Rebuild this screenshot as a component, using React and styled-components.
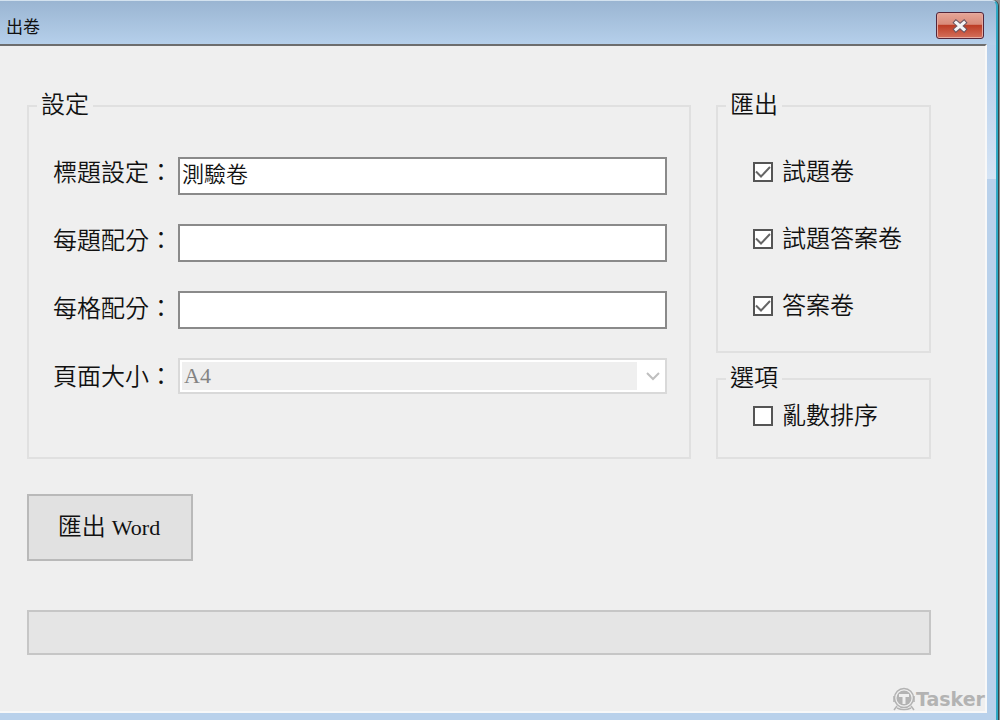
import React, { useState } from "react";
import styled, { createGlobalStyle } from "styled-components";

const EXPORTS = [
  { id: "paper", label: "試題卷", on: true },
  { id: "paperKey", label: "試題答案卷", on: true },
  { id: "key", label: "答案卷", on: true },
];

const CheckItem = ({ label, defaultChecked }) => (
  <CheckLabel>
    <Checkbox type="checkbox" defaultChecked={defaultChecked} />
    <Tick viewBox="0 0 20 20" aria-hidden="true">
      <path d="M3 9.5l5 5L17 5" />
    </Tick>
    {label}
  </CheckLabel>
);

const App = () => {
  const [title, setTitle] = useState("測驗卷");

  return (
    <>
      <GlobalStyle />
      <Window>
        <TitleBar>
          <Caption>出卷</Caption>
          <CloseButton type="button" aria-label="關閉">
            <svg width="18" height="14" viewBox="0 0 18 14" aria-hidden="true">
              <g fill="none" strokeLinecap="square">
                <path d="M5 3.5l8 7M13 3.5l-8 7" stroke="#6b5560" strokeWidth="5" />
                <path d="M5 3.5l8 7M13 3.5l-8 7" stroke="#f4f4f6" strokeWidth="3" />
              </g>
            </svg>
          </CloseButton>
        </TitleBar>
        <Client>
          <Panels>
            <Group>
              <Legend>設定</Legend>
              <Form>
                <Labels>
                  <label htmlFor="title">標題設定：</label>
                  <label htmlFor="perQuestion">每題配分：</label>
                  <label htmlFor="perBlank">每格配分：</label>
                  <label htmlFor="pageSize">頁面大小：</label>
                </Labels>
                <Fields>
                  <TextInput
                    id="title"
                    value={title}
                    onChange={(e) => setTitle(e.target.value)}
                  />
                  <TextInput id="perQuestion" />
                  <TextInput id="perBlank" />
                  <Combo>
                    <Select id="pageSize" disabled>
                      <option>A4</option>
                    </Select>
                    <svg width="28" height="28" viewBox="0 0 28 28" aria-hidden="true">
                      <path
                        d="M10 11l6 6 6-6"
                        fill="none"
                        stroke="#bfbfbf"
                        strokeWidth="2"
                      />
                    </svg>
                  </Combo>
                </Fields>
              </Form>
            </Group>
            <Side>
              <Group $grow>
                <Legend>匯出</Legend>
                <Checks $top={33}>
                  {EXPORTS.map((item) => (
                    <CheckItem
                      key={item.id}
                      label={item.label}
                      defaultChecked={item.on}
                    />
                  ))}
                </Checks>
              </Group>
              <Group>
                <Legend>選項</Legend>
                <Checks $top={4}>
                  <CheckItem label="亂數排序" />
                </Checks>
              </Group>
            </Side>
          </Panels>
          <ExportButton type="button">
            匯出 <Latin>Word</Latin>
          </ExportButton>
          <Progress value="0" max="100" aria-label="匯出進度" />
          <Watermark>
            <svg width="22" height="24" viewBox="0 0 22 24" aria-hidden="true">
              <g fill="none" stroke="#b3b3b3" strokeWidth="1.5">
                <circle cx="11" cy="11" r="9.5" />
                <path d="M4 19l-3 4M18 19l3 4M4 21c4 2 10 2 14 0M1 9v6M21 9v6" />
              </g>
              <circle cx="11" cy="11" r="7.5" fill="#b3b3b3" />
              <path d="M6 7h10v3h-3.5v7h-3v-7H6z" fill="#efefef" />
            </svg>
            Tasker
          </Watermark>
        </Client>
      </Window>
    </>
  );
};

export default App;

const GlobalStyle = createGlobalStyle`
  * {
    box-sizing: border-box;
  }
  body {
    margin: 0;
    background: #8f8f8f;
    color: #111;
    font-family: "Liberation Serif", "Noto Sans CJK TC", serif;
    font-size: 24px;
    font-weight: 350;
    line-height: 28px;
  }
  button, input, select {
    font: inherit;
    color: inherit;
  }
`;

const Window = styled.div`
  min-height: 100vh;
  display: flex;
  flex-direction: column;
  padding: 0 9px 7px 0;
  margin-right: 2px;
  border-top: 1px solid #d3e2ef;
  border-right: 2px solid #2fa9c4;
  border-top-right-radius: 6px;
  box-shadow: 1px 0 0 #35454b;
  background:
    linear-gradient(#9ab5d2, #b6d0eb) top / 100% 44px no-repeat,
    linear-gradient(#b4cdea 44px, #d5e4f5 178px, #b9d1eb 178px);
`;

const TitleBar = styled.header`
  height: 43px;
  display: flex;
  align-items: center;
  justify-content: space-between;
  padding: 6px 3px 0 6px;
`;

const Caption = styled.h1`
  margin: 0;
  font-family: "Noto Sans CJK TC", sans-serif;
  font-size: 17px;
  font-weight: 400;
`;

const CloseButton = styled.button`
  width: 48px;
  height: 27px;
  display: flex;
  align-items: center;
  justify-content: center;
  padding: 0;
  border: 1px solid #54263a;
  border-radius: 3px;
  background: linear-gradient(#e6a698, #d98a7a 45%, #bd3d26 50%, #d4705c);
  box-shadow: inset 0 0 0 1px #e5aaa0;
`;

const Client = styled.main`
  position: relative;
  flex: 1;
  padding: 45px 54px 56px 27px;
  border-top: 2px solid #6d6d6d;
  border-right: 2px solid #f8f8f8;
  border-bottom: 2px solid #f8f8f8;
  background: #efefef;
`;

const Panels = styled.div`
  display: grid;
  grid-template-columns: 1fr 215px;
  gap: 25px;
`;

const Group = styled.fieldset`
  min-width: 0;
  margin: 0;
  padding: 0 8px;
  border: 2px solid #e0e0e0;
  flex: ${(props) => (props.$grow ? "1" : "none")};
`;

const Legend = styled.legend`
  padding: 0 4px 2px;
`;

const Side = styled.div`
  display: flex;
  flex-direction: column;
  gap: 11px;
`;

const Form = styled.div`
  display: flex;
  padding: 36px 14px 63px 16px;
`;

const Labels = styled.div`
  width: 125px;
  flex: none;
  display: flex;
  flex-direction: column;
  gap: 40px;
  padding-top: 2px;
`;

const Fields = styled.div`
  flex: 1;
  min-width: 0;
  display: flex;
  flex-direction: column;
  gap: 29px;
`;

const TextInput = styled.input`
  width: 100%;
  height: 38px;
  padding: 0 2px 8px;
  border: 2px solid #8a8a8a;
  border-radius: 0;
  background: #fff;
  font-size: 22px;
`;

const Combo = styled.div`
  height: 36px;
  display: flex;
  align-items: center;
  padding: 2px 0 2px 2px;
  border: 2px solid #d9d9d9;
  background: #fff;
`;

const Select = styled.select`
  appearance: none;
  flex: 1;
  height: 28px;
  padding: 0 2px;
  border: 0;
  border-radius: 0;
  background: #efefef;
  color: #838383;
  font-size: 22px;
  opacity: 1;
`;

const Checks = styled.div`
  display: flex;
  flex-direction: column;
  gap: 31px;
  padding: ${(props) => props.$top}px 0 23px 27px;
`;

const CheckLabel = styled.label`
  height: 36px;
  display: grid;
  grid-template-columns: 20px 1fr;
  align-items: center;
  column-gap: 9px;
  white-space: nowrap;
`;

const Checkbox = styled.input`
  appearance: none;
  grid-area: 1 / 1;
  width: 20px;
  height: 20px;
  margin: 0;
  border: 2px solid #555;
  background: #fff;
`;

const Tick = styled.svg`
  grid-area: 1 / 1;
  width: 20px;
  height: 20px;
  fill: none;
  stroke: #666;
  stroke-width: 2;
  pointer-events: none;
  visibility: hidden;

  ${Checkbox}:checked + & {
    visibility: visible;
  }
`;

const ExportButton = styled.button`
  display: block;
  min-width: 166px;
  height: 67px;
  margin: 35px 0 49px;
  padding: 0 22px 0 20px;
  border: 2px solid #b9b9b9;
  background: #e1e1e1;
`;

const Latin = styled.span`
  font-size: 22px;
`;

const Progress = styled.progress`
  appearance: none;
  display: block;
  width: 100%;
  height: 45px;
  border: 2px solid #c6c6c6;
  background: #e5e5e5;

  &::-webkit-progress-bar {
    background: #e5e5e5;
  }
  &::-webkit-progress-value {
    background: #06b025;
  }
`;

const Watermark = styled.div`
  position: absolute;
  right: 0;
  bottom: 0;
  display: flex;
  align-items: center;
  gap: 1px;
  color: #b3b3b3;
  font-family: "DejaVu Sans", sans-serif;
  font-size: 19px;
  font-weight: 700;
  line-height: 24px;
`;
